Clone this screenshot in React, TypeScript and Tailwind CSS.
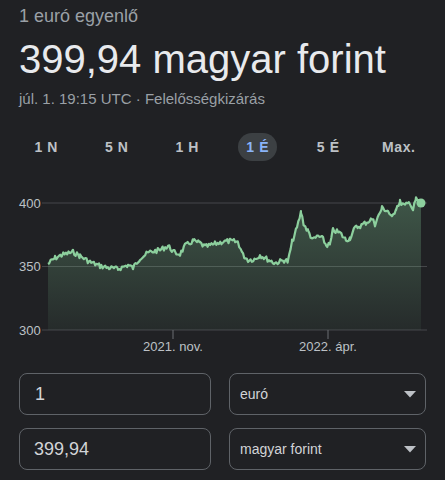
import React from 'react';

const ranges = ['1 N', '5 N', '1 H', '1 É', '5 É', 'Max.'];

// rough shape of the curve, [x, y] in chart pixels
const keys: [number, number][] = [
  [48, 264], [55, 258], [62, 255], [73, 252], [80, 256], [90, 262], [100, 266],
  [110, 268], [118, 269], [128, 265], [133, 268], [140, 258], [150, 252],
  [160, 250], [168, 246], [175, 253], [180, 254], [185, 246], [193, 241],
  [200, 243], [205, 247], [215, 244], [222, 242], [230, 241], [238, 242],
  [243, 255], [248, 260], [255, 259], [260, 255], [265, 258], [275, 263],
  [285, 260], [288, 262], [292, 242], [297, 228], [301, 212], [304, 225],
  [308, 231], [313, 240], [318, 236], [323, 239], [326, 245], [330, 245],
  [333, 230], [340, 233], [346, 240], [350, 238], [355, 228], [362, 225],
  [367, 222], [372, 219], [375, 224], [382, 208], [388, 211], [392, 218],
  [396, 208], [400, 202], [405, 206], [410, 202], [413, 210], [416, 199], [421, 203],
];

const buildPoints = () => {
  const pts: [number, number][] = [];
  let seed = 7;
  const rand = () => {
    seed = (seed * 9301 + 49297) % 233280;
    return seed / 233280;
  };
  for (let i = 0; i < keys.length - 1; i++) {
    const [x0, y0] = keys[i];
    const [x1, y1] = keys[i + 1];
    for (let x = x0; x < x1; x += 1.3) {
      const t = (x - x0) / (x1 - x0);
      pts.push([x, y0 + (y1 - y0) * t + (rand() - 0.5) * 5]);
    }
  }
  pts.push(keys[keys.length - 1]);
  return pts;
};

const PriceChart = () => {
  const pts = buildPoints();
  const off = 180;
  const line = pts.map(([x, y], i) => `${i ? 'L' : 'M'}${x.toFixed(1)} ${(y - off).toFixed(1)}`).join(' ');
  const area = `${line} L421 ${330 - off} L48 ${330 - off} Z`;

  return (
    <svg width="445" height="180" className="block" style={{ fontFamily: '"Liberation Sans", Arial, sans-serif' }}>
      <defs>
        <linearGradient id="fill" x1="0" y1="0" x2="0" y2="1">
          <stop offset="0%" stopColor="#81c995" stopOpacity="0.32" />
          <stop offset="100%" stopColor="#81c995" stopOpacity="0.06" />
        </linearGradient>
      </defs>
      {[400, 350, 300].map((v, i) => {
        const y = 203 + i * 63.5 - off;
        return (
          <g key={v}>
            <line x1="42" x2="427" y1={y} y2={y} stroke="#45474a" strokeWidth="1" />
            <text x="19" y={y + 4.5} fontSize="13" fill="#bdc1c6">{v}</text>
          </g>
        );
      })}
      <path d={area} fill="url(#fill)" />
      <path d={line} fill="none" stroke="#8ccf9d" strokeWidth="2.2" strokeLinejoin="round" />
      <circle cx="421" cy={203 - off} r="4.5" fill="#8ccf9d" />
      {[[173, '2021. nov.'], [328, '2022. ápr.']].map(([x, label]) => (
        <g key={label as string}>
          <line x1={x} x2={x} y1={330 - off} y2={339 - off} stroke="#6b6e72" strokeWidth="1" />
          <text x={x} y={351 - off} fontSize="13" fill="#bdc1c6" textAnchor="middle">{label}</text>
        </g>
      ))}
    </svg>
  );
};

const Caret = () => (
  <svg width="12" height="7" viewBox="0 0 12 7" className="shrink-0">
    <path d="M0 0 L12 0 L6 6.5 Z" fill="#bdc1c6" />
  </svg>
);

export default function App() {
  return (
    <div className="w-[445px] h-[480px] bg-[#202124] overflow-hidden font-['Liberation_Sans',Arial,sans-serif]">
      <div className="px-[19px] pt-[6px]">
        <p className="text-[18px] leading-[21px] text-[#9aa0a6]">1 euró egyenlő</p>
        <p className="mt-[9px] text-[40px] leading-[46px] text-[#e8eaed]">399,94 magyar forint</p>
        <p className="mt-[8px] text-[15px] leading-[18px] text-[#9aa0a6]">júl. 1. 19:15 UTC · Felelősségkizárás</p>
      </div>

      <div className="mt-[25px] px-[11px] grid grid-cols-6 h-[28px]">
        {ranges.map((r) => (
          <div key={r} className="flex items-center justify-center">
            <span
              className={
                r === '1 É'
                  ? 'h-[28px] w-[39px] rounded-full bg-[#3c4043] flex items-center justify-center text-[14px] font-bold tracking-[0.6px] text-[#8ab4f8]'
                  : 'text-[14px] font-bold tracking-[0.6px] text-[#bdc1c6]'
              }
            >
              {r}
            </span>
          </div>
        ))}
      </div>

      <div className="mt-[19px]">
        <PriceChart />
      </div>

      <div className="mt-[13px] px-[19px] grid grid-cols-[192px_1fr] gap-x-[18px] gap-y-[13px]">
        <div className="h-[42px] rounded-[8px] border border-[#5f6368] flex items-center px-[15px] text-[18px] text-[#d2d4d7]">1</div>
        <div className="h-[42px] rounded-[8px] border border-[#5f6368] flex items-center justify-between pl-[10px] pr-[9px] text-[14px] text-[#d2d4d7]">
          <span>euró</span>
          <Caret />
        </div>
        <div className="h-[42px] rounded-[8px] border border-[#5f6368] flex items-center px-[14px] text-[18px] text-[#d2d4d7]">399,94</div>
        <div className="h-[42px] rounded-[8px] border border-[#5f6368] flex items-center justify-between pl-[10px] pr-[9px] text-[14px] text-[#d2d4d7]">
          <span>magyar forint</span>
          <Caret />
        </div>
      </div>
    </div>
  );
}
